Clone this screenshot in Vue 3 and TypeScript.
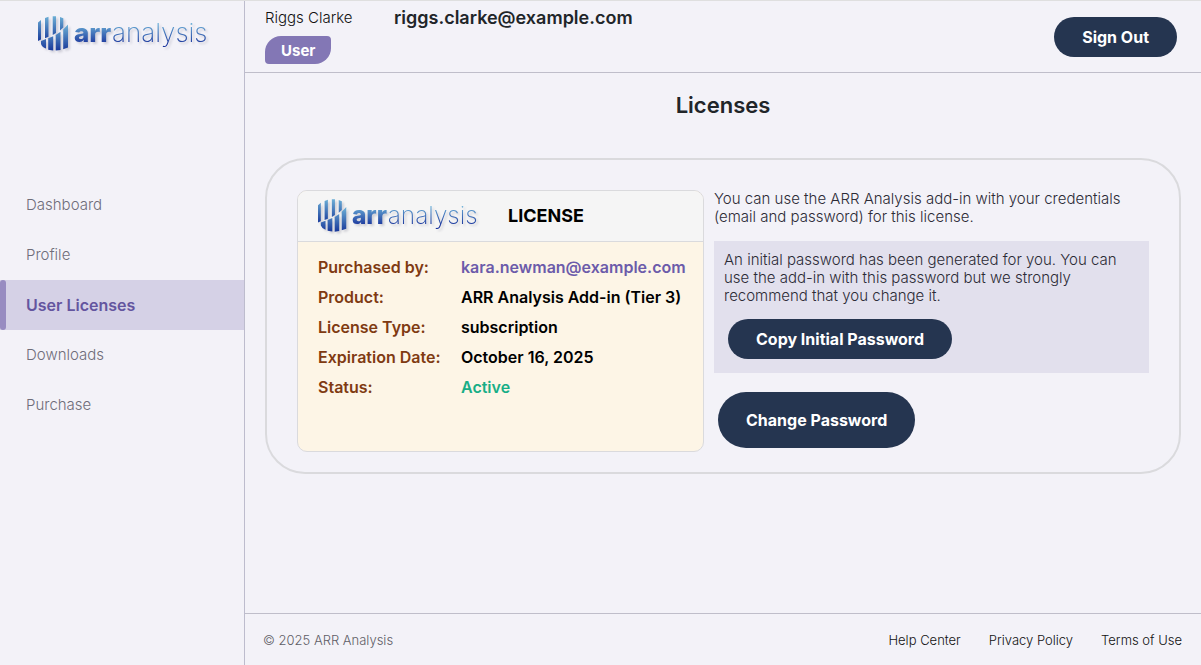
<script setup lang="ts">
interface Item { label: string; active?: boolean }
interface Row { label: string; value: string; kind?: string }

const items: Item[] = [
  { label: 'Dashboard' },
  { label: 'Profile' },
  { label: 'User Licenses', active: true },
  { label: 'Downloads' },
  { label: 'Purchase' },
]
const rows: Row[] = [
  { label: 'Purchased by:', value: 'kara.newman@example.com', kind: 'email' },
  { label: 'Product:', value: 'ARR Analysis Add-in (Tier 3)' },
  { label: 'License Type:', value: 'subscription' },
  { label: 'Expiration Date:', value: 'October 16, 2025' },
  { label: 'Status:', value: 'Active', kind: 'status' },
]
const links: string[] = ['Help Center', 'Privacy Policy', 'Terms of Use']
</script>

<template>
  <svg class="defs" width="0" height="0" aria-hidden="true">
    <defs>
      <linearGradient id="bars" x1="0" y1="0" x2="0" y2="25" gradientUnits="userSpaceOnUse">
        <stop offset="0" stop-color="#6db0d6" />
        <stop offset="1" stop-color="#193b9b" />
      </linearGradient>
      <linearGradient id="lower" x1="0" y1="9" x2="0" y2="34" gradientUnits="userSpaceOnUse">
        <stop offset="0" stop-color="#6db0d6" />
        <stop offset="1" stop-color="#1a3a9b" />
      </linearGradient>
      <linearGradient id="word" x1="0" y1="7" x2="0" y2="29" gradientUnits="userSpaceOnUse">
        <stop offset="0" stop-color="#6cb2d8" />
        <stop offset="1" stop-color="#17309a" />
      </linearGradient>
      <symbol id="logo" viewBox="0 0 172 36">
        <path fill="url(#bars)" d="M0 6.5l3-2.5v19.5l-3 1.5zM7 2l3.5-1.2v20l-3.500 1.400zM14.700 0.300h3.300v16.700l-3.300 2zM22 1l3.300 1.300v9.200l-3.300 3z" />
        <path fill="url(#lower)" d="M3 25l5-2v9.500q-4-1.500-5-4.500zM10.200 22.200l5-2v14.300l-5-0.800zM17.700 19l4.800-3.200v18.200l-4.800 0.600zM25.200 13.500l4.800-5v23l-4.800 1.700z" />
        <g fill="url(#word)" font-family="Inter, sans-serif" font-size="26">
          <text x="36" y="26" font-weight="800">arr</text>
          <text x="74" y="26" font-weight="200">analysis</text>
        </g>
      </symbol>
    </defs>
  </svg>
  <div class="page">
    <aside class="sidebar">
      <svg class="logo" viewBox="0 0 172 36" role="img" aria-label="arranalysis"><use href="#logo" /></svg>
      <nav class="nav">
        <a v-for="item in items" :key="item.label" href="#" :class="['nav-item', { active: item.active }]">{{ item.label }}</a>
      </nav>
    </aside>
    <div class="main">
      <header class="topbar">
        <div class="person">
          <div class="name">Riggs Clarke</div>
          <span class="badge">User</span>
        </div>
        <div class="account">riggs.clarke@example.com</div>
        <button class="btn sign-out" type="button">Sign Out</button>
      </header>
      <main class="content">
        <h1>Licenses</h1>
        <section class="panel">
          <article class="license">
            <div class="license-head">
              <svg class="logo small" viewBox="0 0 172 36" role="img" aria-label="arranalysis"><use href="#logo" /></svg>
              <h2>LICENSE</h2>
            </div>
            <table class="details">
              <tbody>
                <tr v-for="row in rows" :key="row.label">
                  <th scope="row">{{ row.label }}</th>
                  <td :class="row.kind">{{ row.value }}</td>
                </tr>
              </tbody>
            </table>
          </article>
          <div class="info">
            <p>You can use the ARR Analysis add-in with your credentials (email and password) for this license.</p>
            <div class="notice">
              <p>An initial password has been generated for you. You can use the add-in with this password but we strongly recommend that you change it.</p>
              <button class="btn" type="button">Copy Initial Password</button>
            </div>
            <button class="btn tall" type="button">Change Password</button>
          </div>
        </section>
      </main>
      <footer class="footer">
        <span class="copyright">© 2025 ARR Analysis</span>
        <nav class="links"><a v-for="link in links" :key="link" href="#">{{ link }}</a></nav>
      </footer>
    </div>
  </div>
</template>

<style>
body { margin: 0; background: #f3f2f8; }
</style>

<style scoped>
* { box-sizing: border-box; }
.defs { position: absolute; }
.page {
  display: flex;
  min-height: 100vh;
  border-top: 1px solid #dfdfdf;
  background: #f3f2f8;
  color: #212529;
  font-family: Inter, "Liberation Sans", sans-serif;
  font-size: 15px;
  font-weight: 300;
  line-height: 18px;
}
a { color: inherit; text-decoration: none; }
.sidebar {
  flex: 0 0 245px;
  border-right: 1px solid #bdbccd;
}
.logo {
  display: block;
  width: 172px;
  height: 36px;
  margin: 15px 0 0 38px;
  overflow: visible;
  filter: drop-shadow(2px 2px 1px rgb(60 60 90 / 20%));
}
.nav { margin-top: 128px; }
.nav-item {
  display: flex;
  align-items: center;
  height: 50px;
  padding-left: 26px;
  color: #6f6d7a;
}
.nav-item.active {
  position: relative;
  background: #d5d1e6;
  color: #64559f;
  font-size: 16px;
  font-weight: 600;
}
.nav-item.active::before {
  content: "";
  position: absolute;
  inset: 0 auto 0 0;
  width: 6px;
  border-radius: 3px;
  background: #988cc1;
}
.main { flex: 1; min-width: 0; display: flex; flex-direction: column; }
.topbar {
  display: flex;
  align-items: flex-start;
  height: 72px;
  padding: 8px 24px 0 20px;
  border-bottom: 1px solid #bfbeca;
}
.person { width: 129px; color: #111; }
.badge {
  display: inline-block;
  margin-top: 9px;
  padding: 6px 16px 4px;
  border-radius: 16px 4px;
  background: #8377b5;
  color: #fff;
  font-size: 15px;
  font-weight: 700;
}
.account { font-size: 18px; font-weight: 600; }
.btn {
  height: 40px;
  padding: 0 28px;
  border: 0;
  border-radius: 28px;
  background: #253550;
  color: #fff;
  font: 700 16px/18px Inter, "Liberation Sans", sans-serif;
}
.sign-out { margin: 8px 0 0 auto; }
.content { flex: 1; padding: 20px; }
h1 { margin: 0; font-size: 22px; line-height: 24px; font-weight: 600; text-align: center; }
.panel {
  display: flex;
  gap: 10px;
  margin-top: 41px;
  padding: 30px 30px 20px;
  border: 2px solid #dadadd;
  border-radius: 40px;
}
.license {
  flex: 0 0 407px;
  min-height: 262px;
  border: 1px solid #dadadd;
  border-radius: 10px;
  background: #fdf5e6;
  overflow: hidden;
}
.license-head {
  display: flex;
  align-items: center;
  gap: 28px;
  height: 51px;
  padding-left: 20px;
  border-bottom: 1px solid #dadadd;
  background: #f5f5f5;
}
.logo.small { width: 162px; height: 34px; margin: 0; }
h2 { margin: 0; color: #000; font-size: 18px; line-height: 22px; font-weight: 700; }
.details { margin: 10px 0 10px 20px; border-collapse: collapse; font-size: 16px; }
.details th, .details td { height: 30px; padding: 0; text-align: left; white-space: nowrap; font-weight: 600; }
.details th { width: 143px; color: #803a12; }
.details td { color: #000; }
.details td.email { color: #6c5baa; }
.details td.status { color: #18ae86; }
.info { flex: 1; min-width: 0; }
.info p { margin: 0; color: #2c2b36; }
.notice { margin: 15px 0 19px; padding: 10px 10px 14px; background: #e2e0ed; }
.notice .btn { display: block; margin: 14px 0 0 4px; }
.btn.tall { height: 56px; margin-left: 4px; }
.footer {
  display: flex;
  align-items: center;
  justify-content: space-between;
  height: 52px;
  padding: 0 19px 0 18px;
  border-top: 1px solid #bfbeca;
  font-size: 13px;
}
.copyright { color: #5f5e67; }
.links { display: flex; gap: 28px; color: #111; }
</style>
